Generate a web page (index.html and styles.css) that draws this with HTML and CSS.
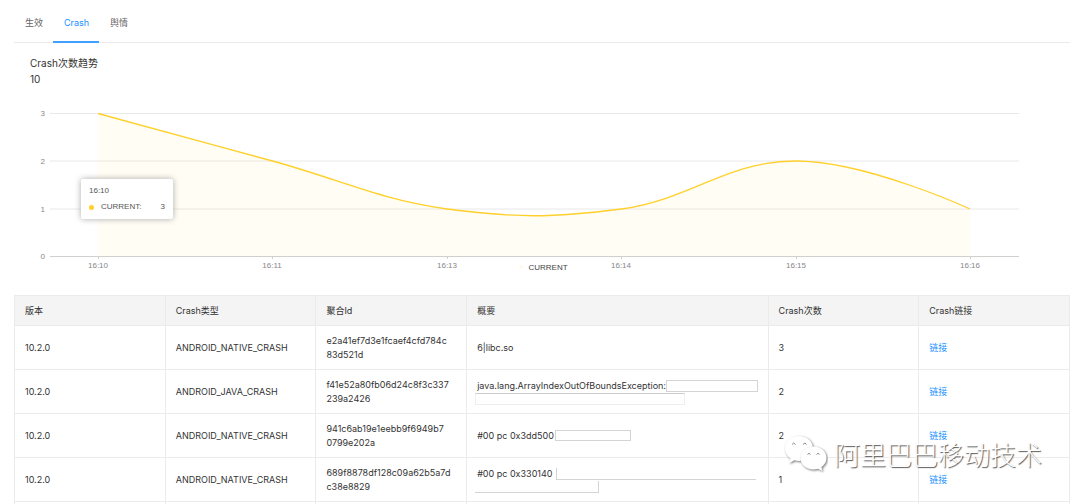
FILE: index.html
```html
<!DOCTYPE html>
<html lang="zh-CN">
<head>
<meta charset="utf-8">
<title>Crash次数趋势</title>
<link rel="stylesheet" href="styles.css">
</head>
<body>
<main class="page">
  <nav class="tabs">
    <button class="tab" type="button">生效</button>
    <button class="tab tab-active" type="button">Crash</button>
    <button class="tab" type="button">舆情</button>
  </nav>

  <header class="summary">
    <h1 class="summary-title">Crash次数趋势</h1>
    <p class="summary-value">10</p>
  </header>

  <section class="chart">
    <svg class="plot" viewBox="0 0 1056 180" role="img" aria-label="CURRENT">
      <g class="grid">
        <path d="M36 13.5H1005M36 61H1005M36 109H1005"/>
      </g>
      <path class="area" d="M84 13.5C84 13.5 188 42 258.500 61C328 80 363 99 433 109C503 118 538 118 607.500 109C678 99 712 61 782 61C852 61 956 109 956 109V156H84Z"/>
      <path class="axis" d="M36 156.500H1005M84.500 156V159M258.500 156V159M433.500 156V159M607.500 156V159M782.500 156V159M956.500 156V159"/>
      <path class="line" d="M84 13.500C84 13.500 188 42 258.500 61C328 80 363 99 433 109C503 118 538 118 607.500 109C678 99 712 61 782 61C852 61 956 109 956 109"/>
      <g class="ylabels">
        <text x="31" y="16">3</text>
        <text x="31" y="64">2</text>
        <text x="31" y="112">1</text>
        <text x="31" y="159">0</text>
      </g>
      <g class="xlabels">
        <text x="84" y="168">16:10</text>
        <text x="258" y="168">16:11</text>
        <text x="433" y="168">16:13</text>
        <text x="607" y="168">16:14</text>
        <text x="782" y="168">16:15</text>
        <text x="956" y="168">16:16</text>
      </g>
      <circle class="legend-dot" cx="507" cy="167" r="2"/>
      <text class="legend" x="534" y="170">CURRENT</text>
    </svg>
    <div class="tooltip">
      <div class="tooltip-title">16:10</div>
      <div class="tooltip-row"><span class="dot"></span><span>CURRENT:</span><span class="tooltip-value">3</span></div>
    </div>
  </section>

  <table class="crashes">
    <colgroup><col><col><col><col class="col-wide"><col><col></colgroup>
    <thead>
      <tr><th>版本</th><th>Crash类型</th><th>聚合Id</th><th>概要</th><th>Crash次数</th><th>Crash链接</th></tr>
    </thead>
    <tbody>
      <tr><td>10.2.0</td><td>ANDROID_NATIVE_CRASH</td><td>e2a41ef7d3e1fcaef4cfd784c<br>83d521d</td><td>6|libc.so</td><td>3</td><td><a href="#">链接</a></td></tr>
      <tr><td>10.2.0</td><td>ANDROID_JAVA_CRASH</td><td>f41e52a80fb06d24c8f3c337<br>239a2426</td><td><div class="detail">java.lang.ArrayIndexOutOfBoundsException:<span class="mask mask-short"></span></div><div class="mask mask-long"></div></td><td>2</td><td><a href="#">链接</a></td></tr>
      <tr><td>10.2.0</td><td>ANDROID_NATIVE_CRASH</td><td>941c6ab19e1eebb9f6949b7<br>0799e202a</td><td><div class="detail">#00 pc 0x3dd500<span class="mask mask-small"></span></div></td><td>2</td><td><a href="#">链接</a></td></tr>
      <tr><td>10.2.0</td><td>ANDROID_NATIVE_CRASH</td><td>689f8878df128c09a62b5a7d<br>c38e8829</td><td><div class="detail">#00 pc 0x330140<span class="mask mask-open"></span></div><div class="mask mask-tail"></div></td><td>1</td><td><a href="#">链接</a></td></tr>
      <tr class="row-cut"><td></td><td></td><td></td><td></td><td></td><td></td></tr>
    </tbody>
  </table>

  <div class="watermark">
    <svg class="watermark-logo" viewBox="0 0 44 38" aria-hidden="true">
      <g class="bubble">
        <path d="M15 1C7 1 1 6.500 1 13.500C1 17.500 3 21 6.500 23.500L5 28L10.500 25.200C12 25.600 13.500 26 15 26C23 26 29 20.500 29 13.500C29 6.500 23 1 15 1Z"/>
        <path d="M29.500 11.500C22 11.500 16.500 16.500 16.500 23C16.500 29.500 22 34.500 29.500 34.500C31 34.500 32.500 34.200 34 33.800L38.500 36L37.400 32.200C40.500 30 42.500 26.800 42.500 23C42.500 16.500 37 11.500 29.500 11.500Z"/>
      </g>
      <path class="eyes" d="M8 9.500Q9.500 6.500 11.500 9.500M19 9.500Q21 6.500 22.500 9.500M23.500 19.500Q25 17 26.500 19.500M32.500 19.500Q34 17 35.500 19.500"/>
    </svg>
    <span>阿里巴巴移动技术</span>
  </div>
</main>
</body>
</html>
```
FILE: styles.css
```css
* {
  box-sizing: border-box;
}

body {
  margin: 0;
  background: #fff;
  color: #333;
  font-family: Inter, "Noto Sans CJK SC", sans-serif;
  font-size: 9px;
  line-height: 14px;
}

.page {
  position: relative;
  padding: 4px 10px 0 14px;
}

.tabs {
  display: flex;
  border-bottom: 1px solid #ebebeb;
}

.tab {
  height: 39px;
  margin-bottom: -1px;
  padding: 0 10px 0 11px;
  border: 0 solid transparent;
  border-bottom-width: 2px;
  background: none;
  color: #666;
  font: inherit;
}

.tab-active {
  border-bottom-color: #40a0ff;
  color: #1890ff;
}

.summary {
  padding: 12px 16px 0;
  font-size: 10px;
  line-height: 16px;
}

.summary-title,
.summary-value {
  margin: 0;
  font-size: inherit;
  font-weight: 400;
}

.chart {
  position: relative;
  padding-top: 13px;
  font-family: "Liberation Sans", sans-serif;
}

.plot {
  display: block;
  width: 100%;
  font-size: 8px;
}

.grid path,
.axis,
.line {
  fill: none;
}

.grid path {
  stroke: #e8e8e8;
}

.axis {
  stroke: #d0d0cc;
}

.area {
  fill: #ffd02b;
  fill-opacity: 0.05;
}

.line {
  stroke: #ffd02b;
  stroke-width: 1.3px;
}

.ylabels,
.xlabels {
  fill: #888;
}

.ylabels {
  text-anchor: end;
}

.xlabels,
.legend {
  text-anchor: middle;
}

.legend {
  fill: #444;
}

.legend-dot {
  fill: #fffbea;
}

.tooltip {
  position: absolute;
  top: 92px;
  left: 67px;
  width: 92px;
  padding: 5px 8px;
  border-radius: 2px;
  background: #fff;
  box-shadow: 0 0 6px #aaa;
  color: #555;
  font-size: 8px;
}

.tooltip-row {
  display: flex;
  align-items: center;
  margin-top: 2px;
}

.dot {
  width: 5px;
  height: 5px;
  margin-right: 7px;
  border-radius: 50%;
  background: #ffd02b;
}

.tooltip-value {
  margin-left: auto;
}

.crashes {
  width: 100%;
  margin-top: 15px;
  border-collapse: collapse;
  table-layout: fixed;
}

.col-wide {
  width: 28.57%;
}

.crashes th,
.crashes td {
  padding: 0 10px;
  border: 1px solid #ebebeb;
  text-align: left;
  font-weight: 400;
}

.crashes th {
  height: 30px;
  background: #f4f4f4;
}

.crashes td {
  height: 44px;
}

.crashes .row-cut td {
  height: 2px;
  border-bottom: 0;
}

.crashes a {
  color: #1890ff;
  text-decoration: none;
}

.detail {
  display: flex;
  align-items: center;
  white-space: nowrap;
}

.mask {
  height: 12px;
  border: 1px solid #d4d4d4;
  background: #fff;
}

.mask-short {
  width: 92px;
}

.mask-long {
  width: 210px;
  margin-left: -2px;
  border-color: #ccc #eee #eee;
}

.mask-small {
  width: 76px;
  height: 11px;
  margin-left: 1px;
}

.mask-open {
  width: 200px;
  margin-left: 4px;
  border-width: 0 0 1px 1px;
}

.mask-tail {
  width: 124px;
  margin-left: -2px;
  border-width: 0 1px 1px 0;
}

.watermark {
  position: absolute;
  right: 38px;
  bottom: 31px;
  display: flex;
  align-items: center;
  gap: 6px;
  color: #fff;
  font-family: "Noto Sans CJK SC", sans-serif;
  font-size: 26px;
  font-weight: 300;
  line-height: 36px;
  text-shadow: 1px 1px 1px #555;
  pointer-events: none;
}

.watermark-logo {
  width: 44px;
  height: 38px;
}

.bubble path {
  fill: #fff;
  filter: drop-shadow(1px 1px 1px #777);
}

.eyes {
  fill: none;
  stroke: #888;
}
```
